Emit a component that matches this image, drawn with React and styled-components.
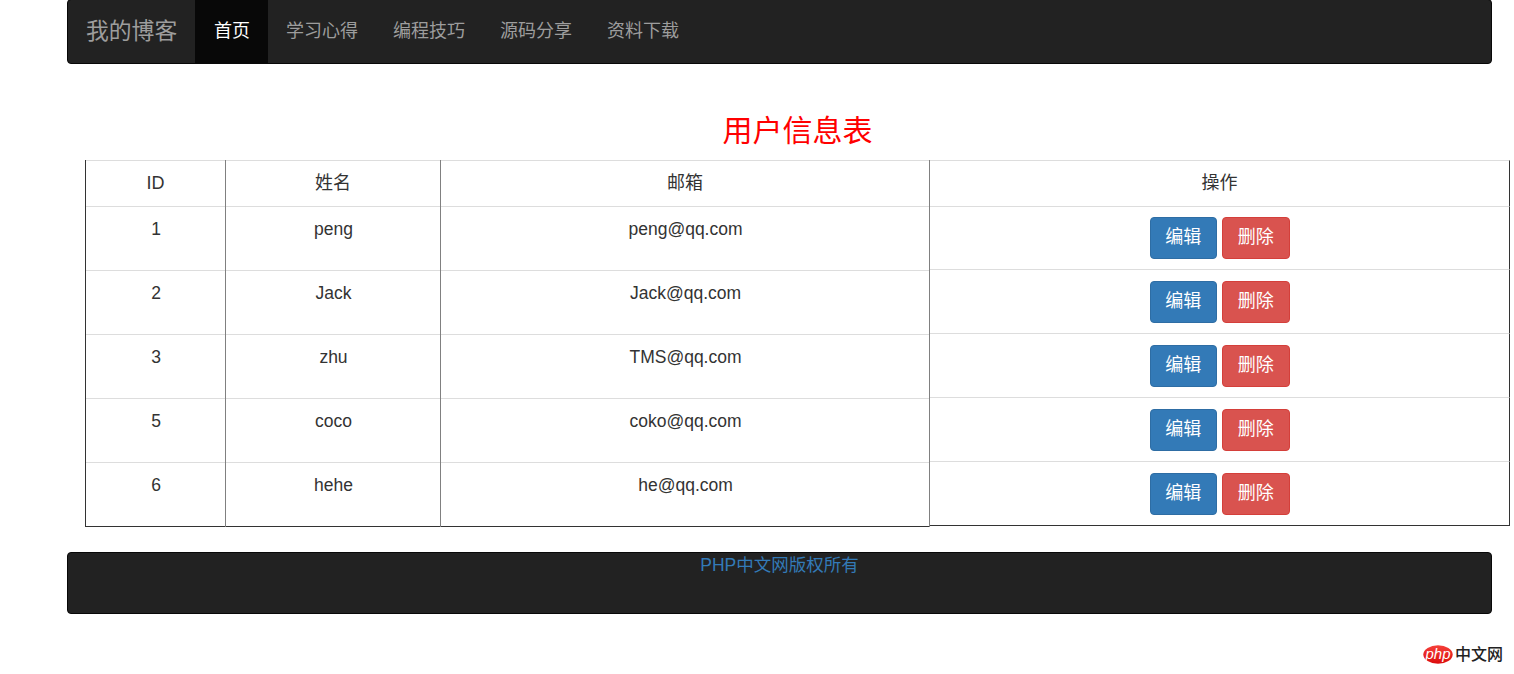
import React from 'react';
import styled, { createGlobalStyle } from 'styled-components';

const users = [
  { id: 1, name: 'peng', email: 'peng@qq.com' },
  { id: 2, name: 'Jack', email: 'Jack@qq.com' },
  { id: 3, name: 'zhu', email: 'TMS@qq.com' },
  { id: 5, name: 'coco', email: 'coko@qq.com' },
  { id: 6, name: 'hehe', email: 'he@qq.com' },
];

const links = ['学习心得', '编程技巧', '源码分享', '资料下载'];

const App = () => {
  return (
    <Page>
      <GlobalStyle />
      <Navbar>
        <Brand>我的博客</Brand>
        <ActiveItem>首页</ActiveItem>
        {links.map((link) => (
          <NavItem key={link}>{link}</NavItem>
        ))}
      </Navbar>

      <Main>
        <Title>用户信息表</Title>
        <Table>
          <Column $width={140} $edge="#333">
            <HeadCell>ID</HeadCell>
            {users.map((user) => (
              <Cell key={user.id}>{user.id}</Cell>
            ))}
          </Column>
          <Column $width={215}>
            <HeadCell>姓名</HeadCell>
            {users.map((user) => (
              <Cell key={user.id}>{user.name}</Cell>
            ))}
          </Column>
          <Column $width={489}>
            <HeadCell>邮箱</HeadCell>
            {users.map((user) => (
              <Cell key={user.id}>{user.email}</Cell>
            ))}
          </Column>
          <Column $width={581}>
            <ActionHead>操作</ActionHead>
            {users.map((user) => (
              <ActionCell key={user.id}>
                <Button $bg="#337ab7" $border="#2e6da4">编辑</Button>
                <Button $bg="#d9534f" $border="#d43f3a">删除</Button>
              </ActionCell>
            ))}
          </Column>
        </Table>
      </Main>

      <Footer>
        <FooterLink>PHP中文网版权所有</FooterLink>
      </Footer>

      <Watermark>
        <svg width="30" height="19" viewBox="0 0 30 19">
          <defs>
            <linearGradient id="phpRed" x1="0" y1="0" x2="0" y2="1">
              <stop offset="0" stopColor="#f5403a" />
              <stop offset="1" stopColor="#dc0c0c" />
            </linearGradient>
          </defs>
          <ellipse cx="15" cy="9.5" rx="14.7" ry="9.3" fill="url(#phpRed)" />
          <text x="15" y="13.5" textAnchor="middle" fontFamily="Liberation Sans, sans-serif" fontSize="15" fontStyle="italic" fill="#fff">php</text>
        </svg>
        <WatermarkText>中文网</WatermarkText>
      </Watermark>
    </Page>
  );
};

const GlobalStyle = createGlobalStyle`
  html, body {
    margin: 0;
    padding: 0;
    background: #fff;
  }
  body {
    font-family: "Liberation Sans", "Noto Sans CJK SC", sans-serif;
    font-size: 17.5px;
    color: #333;
  }
`;

const Page = styled.div`
  position: relative;
  width: 1514px;
  height: 674px;
  overflow: hidden;
  padding-left: 67px;
  box-sizing: border-box;
`;

const Navbar = styled.nav`
  display: flex;
  box-sizing: border-box;
  width: 1425px;
  height: 65px;
  margin-top: -1px;
  background: #222;
  border: 1px solid #080808;
  border-radius: 4px;
`;

const Brand = styled.a`
  padding: 0 18px;
  width: 127px;
  box-sizing: border-box;
  line-height: 63px;
  font-size: 22.8px;
  color: #9d9d9d;
  white-space: nowrap;
`;

const NavItem = styled.a`
  padding: 0 17px 0 18px;
  line-height: 63px;
  font-size: 18px;
  color: #9d9d9d;
  white-space: nowrap;
`;

const ActiveItem = styled(NavItem)`
  padding: 0 18px 0 19px;
  color: #fff;
  background: #080808;
`;

const Main = styled.main`
  margin-left: 18px;
  width: 1425px;
`;

const Title = styled.h2`
  margin: 0;
  padding-top: 46px;
  height: 50px;
  box-sizing: content-box;
  line-height: 42px;
  font-size: 30px;
  font-weight: 400;
  color: #f00;
  text-align: center;
`;

const Table = styled.div`
  display: flex;
  text-align: center;
`;

const Column = styled.div`
  display: flex;
  flex-direction: column;
  box-sizing: border-box;
  width: ${(p) => p.$width}px;
  border-left: 1px solid ${(p) => p.$edge || '#808080'};
`;

const HeadCell = styled.div`
  box-sizing: border-box;
  height: 47px;
  line-height: 44px;
  font-size: 18px;
  border-top: 1px solid #ddd;
  border-bottom: 1px solid #ddd;
`;

const Cell = styled.div`
  box-sizing: border-box;
  height: 64px;
  padding: 10px 0 0 1px;
  line-height: 25px;
  border-bottom: 1px solid #ddd;
  &:last-child {
    border-bottom-color: #333;
  }
`;

const ActionHead = styled(HeadCell)`
  border-right: 1px solid #333;
`;

const ActionCell = styled.div`
  display: flex;
  justify-content: center;
  gap: 5px;
  box-sizing: border-box;
  height: 64px;
  padding-top: 11px;
  border-bottom: 1px solid #ddd;
  border-right: 1px solid #333;
  &:nth-child(2) {
    height: 63px;
    padding-top: 10px;
  }
  &:last-child {
    border-bottom-color: #333;
  }
`;

const Button = styled.a`
  box-sizing: border-box;
  width: 67.5px;
  height: 42px;
  line-height: 38px;
  font-size: 18px;
  text-align: center;
  color: #fff;
  background: ${(p) => p.$bg};
  border: 1px solid ${(p) => p.$border};
  border-radius: 4px;
`;

const Footer = styled.footer`
  box-sizing: border-box;
  width: 1425px;
  height: 62px;
  margin-top: 25px;
  text-align: center;
  background: #222;
  border: 1px solid #080808;
  border-radius: 4px;
`;

const FooterLink = styled.a`
  display: block;
  line-height: 24px;
  color: #337ab7;
`;

const Watermark = styled.div`
  position: absolute;
  left: 1423px;
  top: 645px;
  display: flex;
  align-items: center;
  gap: 2px;
`;

const WatermarkText = styled.span`
  font-size: 16px;
  line-height: 18px;
  font-weight: 500;
  color: #222;
`;

export default App;
